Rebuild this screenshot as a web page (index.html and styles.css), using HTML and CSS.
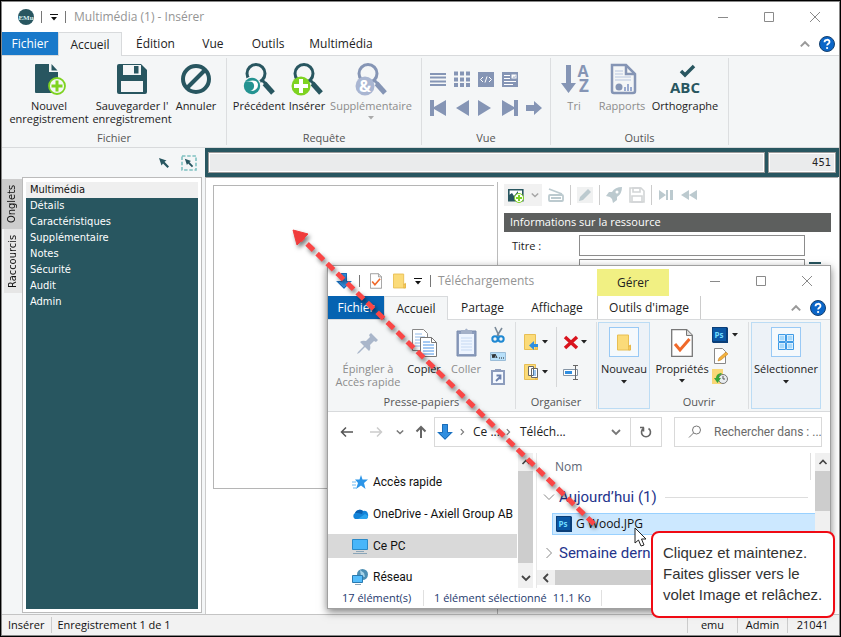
FILE: index.html
```html
<!DOCTYPE html>
<html lang="fr">
<head>
<meta charset="utf-8">
<title>Multimédia (1) - Insérer</title>
<link rel="stylesheet" href="styles.css">
</head>
<body>
<svg class="defs" aria-hidden="true">
  <defs>
    <symbol id="min" viewBox="0 0 12 12"><path d="M1 6.500h10" stroke="#8a8a8a" fill="none"/></symbol>
    <symbol id="max" viewBox="0 0 12 12"><path d="M1.500 1.500h9v9h-9z" stroke="#8a8a8a" fill="none"/></symbol>
    <symbol id="close" viewBox="0 0 12 12"><path d="M1 1l10 10M11 1L1 11" stroke="#8a8a8a" fill="none"/></symbol>
    <symbol id="up" viewBox="0 0 10 10"><path d="M1.500 7L5 3.500 8.500 7" stroke="currentColor" stroke-width="1.600" fill="none"/></symbol>
    <symbol id="down" viewBox="0 0 10 10"><path d="M1 3l4 4 4-4" stroke="currentColor" stroke-width="1.800" fill="none"/></symbol>
    <symbol id="thindown" viewBox="0 0 12 12"><path d="M1 3.500l5 5 5-5" stroke="currentColor" fill="none"/></symbol>
    <symbol id="thinright" viewBox="0 0 12 12"><path d="M3.500 1l5 5-5 5" stroke="currentColor" fill="none"/></symbol>
    <symbol id="right" viewBox="0 0 10 10"><path d="M3.500 1.500L7 5 3.500 8.500" stroke="currentColor" stroke-width="1.400" fill="none"/></symbol>
    <symbol id="left" viewBox="0 0 10 10"><path d="M7 1L3 5l4 4" stroke="currentColor" stroke-width="1.800" fill="none"/></symbol>
    <symbol id="caret" viewBox="0 0 6 4"><path d="M0 0h6L3 3.500z" fill="currentColor"/></symbol>
    <symbol id="qat" viewBox="0 0 8 8"><path d="M0 1.500h8" stroke="#111" /><path d="M1 4h6L4 7.500z" fill="#111"/></symbol>
    <symbol id="help" viewBox="0 0 16 16"><circle cx="8" cy="8" r="7.500" fill="#0b66c8" stroke="#16406e"/><path d="M5.500 6.200C5.500 3 10.600 3 10.500 6c0 1.700-2.400 1.900-2.400 3.600" fill="none" stroke="#fff" stroke-width="1.800"/><circle cx="8.100" cy="12" r="1.100" fill="#fff"/></symbol>
    <symbol id="lens" viewBox="0 0 32 32"><circle cx="13" cy="10.500" r="9" fill="none" stroke="currentColor" stroke-width="3"/><path d="M19 17l3.500 3.500" stroke="currentColor" stroke-width="3"/><path d="M21.500 20.500l8.500 9.500" stroke="currentColor" stroke-width="5"/></symbol>
    <symbol id="ps" viewBox="0 0 16 16"><path d="M0 0h15l1 1v15H1l-1-1z" fill="#0a3e78"/><path d="M1 1h13v13H1z" fill="#0a57a4"/><text x="2.500" y="11" font-family="Open Sans" font-weight="700" font-size="8" fill="#6fdcff">Ps</text></symbol>
    <symbol id="pointer" viewBox="0 0 12 12"><path d="M1 1l7.500 2.500-2 1.300L11 9.500 9.500 11 5 6.500 3.500 8.500z" fill="#285660"/></symbol>
    <symbol id="bluedown" viewBox="0 0 16 16"><path d="M5 0h6v8h5l-8 8-8-8h5z" fill="#2f8ee0"/><path d="M5.500.5h5v8h4L8 15 1.500 8.500h4z" fill="none" stroke="#1b6cb8"/></symbol>
    <symbol id="folder" viewBox="0 0 14 16"><path d="M.5.5h11V12l2-1.500v5H.5z" fill="#fbdb79" stroke="#e8bf54"/><path d="M11.500 11.500h2v4h-2z" fill="#f7c95b" stroke="#e0b040" stroke-width=".6"/></symbol>
    <symbol id="checkdoc" viewBox="0 0 22 28"><path d="M.7.7h15l5.600 5.600v21H.7z" fill="#fff" stroke="#777" stroke-width="1.300"/><path d="M15.500.7v5.800h5.800" fill="#ddd" stroke="#777"/><path d="M4 15l5 6 9.500-11" fill="none" stroke="#f0692a" stroke-width="3"/></symbol>
  </defs>
</svg>

<div class="app">
  <header class="titlebar">
    <svg class="logo" viewBox="0 0 16 16"><circle cx="8" cy="8" r="8" fill="#285660"/><text x="8" y="10.600" text-anchor="middle" font-family="Liberation Serif" font-weight="700" font-size="7" fill="#d6eeee">EMu</text></svg>
    <i class="vbar"></i>
    <svg class="i8"><use href="#qat"/></svg>
    <i class="vbar"></i>
    <span class="title">Multimédia (1) - Insérer</span>
    <div class="winbtns">
      <button aria-label="Réduire"><svg class="i12"><use href="#min"/></svg></button>
      <button aria-label="Agrandir"><svg class="i12"><use href="#max"/></svg></button>
      <button aria-label="Fermer"><svg class="i12"><use href="#close"/></svg></button>
    </div>
  </header>

  <nav class="tabs">
    <button class="file">Fichier</button>
    <button class="active">Accueil</button>
    <button class="t-edit">Édition</button>
    <button class="t-view">Vue</button>
    <button class="t-tools">Outils</button>
    <button class="t-mm">Multimédia</button>
    <div class="helpers"><svg class="i12"><use href="#up"/></svg><svg class="i16"><use href="#help"/></svg></div>
  </nav>

  <section class="ribbon">
    <div class="group">
      <div class="items g-file">
        <button class="big"><svg viewBox="0 0 32 32"><path d="M3 1h13v8h9v20q0 1-1 1H3q-1 0-1-1V2q0-1 1-1z" fill="#285660"/><path d="M18.500 1l6 6.500h-6z" fill="#285660"/><circle cx="24" cy="23" r="8" fill="#f4f6f7" stroke="#7ed321" stroke-width="1.800"/><path d="M24 17.500v11M18.500 23h11" stroke="#7ed321" stroke-width="3"/></svg><span>Nouvel<br>enregistrement</span></button>
        <button class="big"><svg viewBox="0 0 32 32"><path d="M3 1h22l6 6v22q0 2-2 2H3q-2 0-2-2V3q0-2 2-2z" fill="#285660"/><path d="M7 2h18v10H7zM5 18h22v11H5z" fill="#f4f6f7"/><path d="M18 3h4.500v7.500H18z" fill="#285660"/></svg><span>Sauvegarder l'<br>enregistrement</span></button>
        <button class="big"><svg viewBox="0 0 32 32"><circle cx="16" cy="16" r="13" fill="none" stroke="#285660" stroke-width="4"/><path d="M7 25L25 7" stroke="#285660" stroke-width="4"/></svg><span>Annuler</span></button>
      </div>
      <div class="glabel">Fichier</div>
    </div>
    <div class="group">
      <div class="items g-query">
        <button class="big teal"><svg viewBox="0 0 32 32"><use href="#lens"/><circle cx="9" cy="23" r="9.500" fill="#f4f6f7"/><circle cx="9" cy="23" r="8.200" fill="#249391"/><path d="M2 19q10-2 9 5-.500 3-4 4 8 0 8-6.500Q14 15 2 19z" fill="#fff"/></svg><span>Précédent</span></button>
        <button class="big teal"><svg viewBox="0 0 32 32"><use href="#lens"/><circle cx="10" cy="23" r="9.500" fill="#7ed321"/><path d="M10 16v14M3 23h14" stroke="#fff" stroke-width="4"/></svg><span>Insérer</span></button>
        <button class="big slate" disabled><svg viewBox="0 0 32 32"><use href="#lens"/><circle cx="10" cy="23" r="9.500" fill="#a9b6d2"/><text x="10" y="29" text-anchor="middle" font-family="Open Sans" font-weight="700" font-size="16" fill="#fff">&amp;</text></svg><span>Supplémentaire</span><svg class="caret"><use href="#caret"/></svg></button>
      </div>
      <div class="glabel">Requête</div>
    </div>
    <div class="group">
      <div class="items g-view">
        <div class="viewrow">
          <svg viewBox="0 0 16 16"><path d="M0 3h16M0 6.500h16M0 10.500h16M0 14h16" stroke="#8595b5" stroke-width="2"/></svg>
          <svg viewBox="0 0 16 16"><path d="M0 2.500h16M0 8.500h16M0 14h16" stroke="#8595b5" stroke-width="4" stroke-dasharray="4 2"/></svg>
          <svg viewBox="0 0 16 16"><path d="M0 1h16v15H0z" fill="#8595b5"/><path d="M5 6L2.500 8.500 5 11M11 6l2.500 2.500L11 11M9 5.500l-2 6" fill="none" stroke="#fff"/></svg>
          <svg viewBox="0 0 16 16"><path d="M0 1h16v15H0z" fill="#8595b5"/><path d="M2 4.500h6M2 7.500h6M2 10.500h12M2 13.500h9" stroke="#fff"/><path d="M9.500 3.500h5v4h-5z" fill="#fff"/><path d="M10.500 6.500l1-1 1 .5 1-2v2.500z" fill="#8595b5"/></svg>
        </div>
        <div class="viewrow">
          <svg viewBox="0 0 16 16"><path d="M0 0h4v7l12-7v16L4 9v7H0z" fill="#8595b5"/></svg>
          <svg viewBox="0 0 16 16"><path d="M15 0v16L2 8z" fill="#8595b5"/></svg>
          <svg viewBox="0 0 16 16"><path d="M0 0v16l13-8z" fill="#8595b5"/></svg>
          <svg viewBox="0 0 16 16"><path d="M16 0h-4v7L0 0v16l12-7v7h4z" fill="#8595b5"/></svg>
          <svg viewBox="0 0 16 16"><path d="M0 5h8V1l8 7-8 7v-4H0z" fill="#8595b5"/></svg>
        </div>
      </div>
      <div class="glabel">Vue</div>
    </div>
    <div class="group">
      <div class="items g-tools">
        <button class="big" disabled><svg viewBox="0 0 32 32"><path d="M8 2h5v18h5l-7.500 10L3 20h5z" fill="#8595b5"/><text x="25" y="14" text-anchor="middle" font-family="Open Sans" font-weight="700" font-size="16" fill="#8595b5">A</text><text x="26" y="29" text-anchor="middle" font-family="Open Sans" font-weight="700" font-size="17" fill="#8595b5">Z</text></svg><span>Tri</span></button>
        <button class="big" disabled><svg viewBox="0 0 32 32"><path d="M6 2h14l9 9v17q0 2-2 2H8q-2 0-2-2z" fill="#f4f6f7" stroke="#8595b5" stroke-width="2.500"/><path d="M20 2v9h9" fill="none" stroke="#8595b5" stroke-width="2.500"/><path d="M9 8h8M9 11h8M9 14h16M9 17h16" stroke="#b8c6e0"/><circle cx="13" cy="24" r="3.500" fill="#8595b5"/><path d="M19 28v-4M22 28v-7M25 28v-4" stroke="#9aabd0" stroke-width="2"/></svg><span>Rapports</span></button>
        <button class="big"><svg viewBox="0 0 32 32"><path d="M12 8l4 4 9-9" fill="none" stroke="#285660" stroke-width="3.500"/><text x="16" y="30" text-anchor="middle" font-family="Open Sans" font-weight="700" font-size="15" fill="#285660">ABC</text></svg><span>Orthographe</span></button>
      </div>
      <div class="glabel">Outils</div>
    </div>
  </section>

  <main class="workspace">
    <aside class="side">
      <div class="sidetools"><svg class="i12"><use href="#pointer"/></svg><svg class="i16" viewBox="0 0 16 16"><path d="M1 1h14v14H1z" fill="none" stroke="#7fc1c1" stroke-width="1.600" stroke-dasharray="3.500 1.700"/><use href="#pointer" x="3" y="3" width="10" height="10"/></svg></div>
      <div class="sidebody">
        <div class="vtabs"><button class="on">Onglets</button><button>Raccourcis</button></div>
        <div class="listbox">
          <ul>
            <li class="sel">Multimédia</li><li>Détails</li><li>Caractéristiques</li><li>Supplémentaire</li><li>Notes</li><li>Sécurité</li><li>Audit</li><li>Admin</li>
          </ul>
        </div>
      </div>
    </aside>
    <section class="record">
      <div class="recbar"><input class="wide" aria-label="Enregistrement" readonly><input class="num" aria-label="Numéro" value="451" readonly></div>
      <div class="recbody">
        <div class="imagecol"><div class="imagepane"></div></div>
        <div class="form">
          <div class="formtools">
            <span class="addimg"><svg class="i16" viewBox="0 0 16 16"><path d="M.8 2.800h14v11H.8z" fill="#fff" stroke="#285660" stroke-width="1.600"/><path d="M1 13V8l3-2 2 3 4-5v9z" fill="#285660"/><circle cx="11" cy="11" r="4.500" fill="#fff" stroke="#7ed321"/><path d="M11 8v6M8 11h6" stroke="#7ed321" stroke-width="2"/></svg><svg class="i8 light"><use href="#down"/></svg></span>
            <svg class="i16" viewBox="0 0 16 16"><path d="M1 2l13 5M1 9q0-1 1-1h12q1 0 1 1v4q0 1-1 1H2q-1 0-1-1zM3 11h10" fill="none" stroke="#bccacf" stroke-width="1.800"/></svg>
            <i></i>
            <svg class="i16 soft" viewBox="0 0 16 16"><path d="M2 14l1-4 8-8 3 3-8 8z" fill="#bccacf"/></svg>
            <i></i>
            <svg class="i16" viewBox="0 0 16 16"><path d="M16 0q-7 0-10 5H3L0 9l4 1 2 2 1 4 4-3v-3q5-3 5-10zM1 15l3-3" fill="#bccacf"/><circle cx="11" cy="5" r="1.500" fill="#fff"/></svg>
            <svg class="i16" viewBox="0 0 16 16"><path d="M1 1h11l3 3v11H1z" fill="#fff" stroke="#d2d5d6" stroke-width="1.600"/><path d="M4 1h7v4H4zM3 9h10v6H3z" fill="none" stroke="#d2d5d6" stroke-width="1.600"/></svg>
            <i></i>
            <svg class="i16" viewBox="0 0 16 16"><path d="M1 3l7 5-7 5zM8 3h2v10H8zM12 3h3v10h-3z" fill="#bccacf"/></svg>
            <svg class="i16" viewBox="0 0 16 16"><path d="M8 3v10L0 8zM16 3v10L8 8z" fill="#bccacf"/></svg>
          </div>
          <h2>Informations sur la ressource</h2>
          <div class="field"><label for="titre">Titre :</label><input id="titre"></div>
          <div class="field"><label class="req" for="auteur">Auteur :</label><input id="auteur"><span class="menu"></span></div>
        </div>
      </div>
    </section>
  </main>

  <footer class="status"><span>Insérer</span><span class="grow">Enregistrement 1 de 1</span><span class="cell">emu</span><span class="cell">Admin</span><span class="cell">21041</span></footer>

  <section class="explorer" aria-label="Téléchargements">
    <header class="xtitle">
      <svg class="i16"><use href="#bluedown"/></svg><i class="vbar"></i>
      <svg class="xdoc"><use href="#checkdoc"/></svg>
      <svg class="xfold"><use href="#folder"/></svg>
      <svg class="i8"><use href="#qat"/></svg><i class="vbar"></i>
      <span class="title">Téléchargements</span>
      <span class="manage">Gérer</span>
      <div class="winbtns">
        <button aria-label="Réduire"><svg class="i12"><use href="#min"/></svg></button>
        <button aria-label="Agrandir"><svg class="i12"><use href="#max"/></svg></button>
        <button aria-label="Fermer"><svg class="i12"><use href="#close"/></svg></button>
      </div>
    </header>
    <nav class="tabs xtabs">
      <button class="file">Fichier</button>
      <button class="active">Accueil</button>
      <button class="x-share">Partage</button>
      <button class="x-view">Affichage</button>
      <button class="x-img">Outils d'image</button>
      <div class="helpers"><svg class="i12"><use href="#up"/></svg><svg class="i16"><use href="#help"/></svg></div>
    </nav>
    <div class="ribbon xribbon">
      <div class="group">
        <div class="items x-clip">
          <button class="big" disabled><svg viewBox="0 0 32 32"><path d="M19 6l7 7-2 2-2-1-4 4q1 4-1 6l-4-4-6 6-2 1 1-2 6-6-4-4q2-2 6-1l4-4-1-2z" fill="#a9b6ca"/></svg><span>Épingler à<br>Accès rapide</span></button>
          <button class="big"><svg viewBox="0 0 32 32"><path d="M4.500 2.500h11l4 4v17h-15z" fill="#fff" stroke="#888"/><path d="M7 7h7M7 10h10M7 13h10M7 16h10M7 19h10" stroke="#8fb8e8"/><path d="M12.500 10.500h11l5 5v14h-16z" fill="#fff" stroke="#777"/><path d="M23.500 10.500v5h5" fill="none" stroke="#777"/><path d="M15 15h7M15 18h11M15 21h11M15 24h11M15 27h11" stroke="#4d94e6"/></svg><span>Copier</span></button>
          <button class="big" disabled><svg viewBox="0 0 32 32"><path d="M7 4h19v25H7z" fill="#8c9dbd" stroke="#7a8cae"/><path d="M9 7h15v20H9z" fill="#eef5ff"/><path d="M11 11h11M11 14h11M11 17h11M11 20h11M11 23h11" stroke="#c6d9f2"/><path d="M11 3h4q1-3 3 0h4v4H11z" fill="#a3b0c8"/></svg><span>Coller</span></button>
          <div class="smalls">
            <svg viewBox="0 0 16 16"><path d="M5 0l4 9M12 1L7 9" stroke="#7a8a99" stroke-width="1.600"/><circle cx="5" cy="12" r="2.700" fill="none" stroke="#1e88d2" stroke-width="2"/><circle cx="11" cy="12" r="2.700" fill="none" stroke="#1e88d2" stroke-width="2"/></svg>
            <svg viewBox="0 0 16 16"><path d="M.5 4.500h15v8H.5z" fill="#b8e0fa" stroke="#9bbdd8"/><path d="M2 6l1 4 1-4 1 4M5 6l2 4M9 10h1M11 10h1M13 10h1" fill="none" stroke="#222"/></svg>
            <svg viewBox="0 0 16 16"><path d="M2 2h12v13H2z" fill="#f5f9ff" stroke="#8d9dbd" stroke-width="2"/><path d="M5 0h6v3H5z" fill="#8d9dbd"/><path d="M6 12l4-4M6.500 6.500h4v4" fill="none" stroke="#6d82ad" stroke-width="1.800"/></svg>
          </div>
        </div>
        <div class="glabel">Presse-papiers</div>
      </div>
      <div class="group">
        <div class="items x-org">
          <div class="duo"><svg class="i16" viewBox="0 0 16 16"><use href="#folder" width="14" height="16"/><path d="M14 10v3h-4v3L5 11.500 10 7v3z" fill="#2f8ee0"/></svg><svg class="caret"><use href="#caret"/></svg></div>
          <div class="duo sep"><svg class="i16" viewBox="0 0 16 16"><path d="M2 3l12 11M14 3L2 14" stroke="#d9141e" stroke-width="3.500"/></svg><svg class="caret"><use href="#caret"/></svg></div>
          <div class="duo"><svg class="i16" viewBox="0 0 16 16"><use href="#folder" width="14" height="16"/><path d="M4.500 2.500h5v9h-5zM7.500 4.500h6v9h-6z" fill="#fff" stroke="#666"/><path d="M9 7h3M9 9h3M9 11h3" stroke="#3d8fe0"/></svg><svg class="caret"><use href="#caret"/></svg></div>
          <div class="duo sep"><svg class="i16" viewBox="0 0 16 16"><path d="M.5 5.500h14v6H.5z" fill="#fff" stroke="#8595a5"/><path d="M2 7h7v3H2z" fill="#2f8ee0"/><path d="M12.500 2v13M10 1.500h5M10 15.500h5" stroke="#666"/></svg></div>
        </div>
        <div class="glabel">Organiser</div>
      </div>
      <button class="tile"><span class="pic"><svg class="tfold"><use href="#folder"/></svg></span><span>Nouveau</span><svg class="caret"><use href="#caret"/></svg></button>
      <div class="group">
        <div class="items x-open">
          <button class="big"><svg viewBox="0 0 32 32"><use href="#checkdoc" x="5" y="2" width="22" height="28"/></svg><span>Propriétés</span><svg class="caret"><use href="#caret"/></svg></button>
          <div class="smalls wide">
            <div class="duo"><svg class="i16"><use href="#ps"/></svg><svg class="caret"><use href="#caret"/></svg></div>
            <svg viewBox="0 0 16 16"><path d="M2.500.5h8l3 3v12h-11z" fill="#fff" stroke="#888"/><path d="M6 13l1-3 7-6 2 2-7 6z" fill="#f3b13c" stroke="#b8751a" stroke-width=".5"/></svg>
            <svg viewBox="0 0 16 16"><path d="M0 0h11v15H0z" fill="#f9d777"/><circle cx="11" cy="10" r="4.500" fill="#e8ecef" stroke="#777"/><path d="M11 7v3h2" fill="none" stroke="#555"/><path d="M9 4q-5 1-5 5H2l3.500 5L9 9H7q0-3 3-4z" fill="#37a53a"/></svg>
          </div>
        </div>
        <div class="glabel">Ouvrir</div>
      </div>
      <button class="tile select"><span class="pic"><svg class="i16" viewBox="0 0 16 16"><path d="M.5.500h7v7h-7zM8.500.500h7v7h-7zM.5 8.500h7v7h-7zM8.500 8.500h7v7h-7z" fill="#fff" stroke="#3f9be6"/><path d="M1.500 1.500h5v5h-5zM9.500 1.500h5v5h-5zM1.500 9.500h5v5h-5zM9.500 9.500h5v5h-5z" fill="#a9dafb"/></svg></span><span>Sélectionner</span><svg class="caret"><use href="#caret"/></svg></button>
    </div>

    <div class="address">
      <svg class="i14" viewBox="0 0 14 14"><path d="M13 7H2M6 2.500L1.500 7 6 11.500" fill="none" stroke="#555" stroke-width="1.500"/></svg>
      <svg class="i14" viewBox="0 0 14 14"><path d="M1 7h11M8 2.500L12.500 7 8 11.500" fill="none" stroke="#ccc" stroke-width="1.500"/></svg>
      <svg class="i8 grey"><use href="#down"/></svg>
      <svg class="i14" viewBox="0 0 14 14"><path d="M7 13V2M2.500 6.500L7 2l4.500 4.500" fill="none" stroke="#666" stroke-width="2"/></svg>
      <div class="path">
        <svg class="i16"><use href="#bluedown"/></svg><svg class="i8 grey"><use href="#right"/></svg><span class="crumb1">Ce ...</span><svg class="i8 grey"><use href="#right"/></svg><span class="crumb2">Téléch...</span>
        <svg class="i10 grey"><use href="#down"/></svg>
        <button class="refresh" aria-label="Actualiser"><svg viewBox="0 0 12 12"><path d="M8.500 2.500A4.500 4.500 0 1 1 3.500 2.500M3.500 5.500V1.500M0 1.500h4" fill="none" stroke="#666" stroke-width="1.600"/></svg></button>
      </div>
      <label class="search"><svg class="i14" viewBox="0 0 14 14"><circle cx="8.500" cy="5" r="4" fill="none" stroke="#777"/><path d="M5.500 8L1 12.500" stroke="#777"/></svg><input aria-label="Rechercher" placeholder="Rechercher dans : ..."></label>
    </div>

    <div class="xbody">
      <ul class="navpane">
        <li><svg class="i16" viewBox="0 0 16 16"><path d="M9 1l1.500 4.500H16l-4 3.500 1.500 6L9 11.500 4 15l2-6-3-3.500h4.500z" fill="#2b95e8"/><path d="M0 8h4M0 11h4M1 14h3" stroke="#6bb8f0"/></svg>Accès rapide</li>
        <li><svg class="i16" viewBox="0 0 16 16"><path d="M3 13a3.500 3.500 0 0 1 0-6 5 5 0 0 1 8-2 4 4 0 0 1 2 8z" fill="#1383d8"/><path d="M6 13l7-5q3 1 3 3t-3 2z" fill="#2ba4ee"/><path d="M3 7a5 5 0 0 1 8-2l-1 3-4-1z" fill="#0b60b0"/></svg>OneDrive - Axiell Group AB</li>
        <li class="sel"><svg class="i16" viewBox="0 0 16 16"><path d="M.5 1.500h15v10H.5z" fill="#48b6fa" stroke="#2a8ac8"/><path d="M4 13.500h8M1 15.500h14" stroke="#8aa5b8"/></svg>Ce PC</li>
        <li><svg class="i16" viewBox="0 0 16 16"><circle cx="10.500" cy="5.500" r="5.500" fill="#4d8fb4"/><path d="M8 1l4 3 1 4-4-1z" fill="#a8d4e8"/><path d="M.5 6.500h10v7H.5z" fill="#55bdfb" stroke="#2a7ab0"/><path d="M3 15.500h6" stroke="#8aa5b8"/></svg>Réseau</li>
      </ul>
      <div class="vscroll"><svg class="i10"><use href="#up"/></svg><i class="long"></i><svg class="i10"><use href="#down"/></svg></div>
      <div class="files">
        <div class="colhead">Nom</div>
        <div class="fgroup"><svg class="i12"><use href="#thindown"/></svg><span>Aujourd’hui (1)</span><hr></div>
        <div class="file-row"><svg class="i16"><use href="#ps"/></svg>G Wood.JPG</div>
        <div class="fgroup later"><svg class="i12"><use href="#thinright"/></svg><span>Semaine dern</span></div>
        <div class="hscroll"><svg class="i10"><use href="#left"/></svg><i></i></div>
      </div>
      <div class="vscroll end"><svg class="i10"><use href="#up"/></svg><i class="short"></i></div>
    </div>
    <footer class="xstatus"><span class="count">17 élément(s)</span><span>1 élément sélectionné</span><span class="size">11.1 Ko</span></footer>
  </section>

  <svg class="drag" viewBox="0 0 320 310" aria-hidden="true">
    <path d="M303 298L8 10" stroke="#fa4646" stroke-width="5" stroke-dasharray="9 5" fill="none"/>
    <path d="M2 4l15 4-11 11z" fill="#f03c3c" stroke="#f03c3c"/>
  </svg>
  <svg class="cursor" viewBox="0 0 13 20" aria-hidden="true"><path d="M1 1v15l3.500-3 2.500 6 3-1-2.500-6H12z" fill="#fff" stroke="#222"/></svg>
  <p class="callout">Cliquez et maintenez. Faites glisser vers le volet Image et relâchez.</p>
</div>
</body>
</html>
```
FILE: styles.css
```css
* { box-sizing: border-box; }
body { margin: 0; font: 12px/16px "Open Sans", "Noto Sans", sans-serif; color: #222; }
button, input { font: inherit; color: inherit; border: 0; padding: 0; margin: 0; background: none; min-width: 0; }
ul { list-style: none; margin: 0; padding: 0; }
svg { flex: none; display: block; overflow: visible; }
.defs { position: absolute; width: 0; height: 0; }
.i8 { width: 8px; height: 8px; }
.i10 { width: 10px; height: 10px; }
.i12 { width: 12px; height: 12px; }
.i14 { width: 14px; height: 14px; }
.i16 { width: 16px; height: 16px; }
.grey { color: #777; }
.light { color: #a5a5a5; }
.caret { width: 6px; height: 4px; }

.app { position: relative; min-height: 100vh; display: flex; flex-direction: column; border: 1px solid #000; border-right-width: 2px; border-bottom-width: 2px; outline: 1px solid #888; outline-offset: -2px; background: #fff; overflow: hidden; }

/* Title bars */
.titlebar { height: 31px; display: flex; align-items: center; padding-left: 17px; }
.logo { width: 16px; height: 16px; }
.vbar { width: 1px; height: 12px; background: #777; margin: 0 8px 0 7px; }
.title { color: #949494; }
.winbtns { margin-left: auto; display: flex; }
.winbtns button { width: 46px; display: flex; justify-content: center; }
.titlebar .winbtns { padding-right: 1px; }

/* Ribbon tabs */
.tabs { height: 24px; display: flex; padding-left: 1px; border-bottom: 1px solid #d8dadc; }
.tabs button { height: 23px; text-align: center; white-space: nowrap; }
.tabs .file { width: 56px; background: #1979ca; color: #fff; }
.tabs .active { width: 64px; height: 24px; background: #f4f6f7; border: 1px solid #d8dadc; border-bottom: 0; }
.t-edit { width: 67px; }
.t-view { width: 48px; }
.t-tools { width: 62px; }
.t-mm { width: 84px; }
.helpers { margin-left: auto; display: flex; align-items: center; gap: 8px; padding-right: 4px; color: #999; }

/* Ribbon */
.ribbon { height: 92px; display: flex; background: #f4f6f7; border-bottom: 1px solid #d8dadc; padding: 2px 0 2px 1px; font-size: 11px; }
.group { display: flex; flex-direction: column; border-right: 1px solid #dcdee0; color: #222; }
.items { height: 73px; display: grid; align-items: start; padding: 5px 4px 0; }
.glabel { text-align: center; line-height: 14px; color: #555; }
.g-file { grid-template-columns: 84px 82px 46px; padding: 5px 7px 0 5px; }
.g-query { grid-template-columns: 60px 36px 92px; padding: 5px 4px 0 2px; }
.g-tools { grid-template-columns: 36px 60px 66px; padding: 5px 10px 0 5px; }
.big { display: flex; flex-direction: column; align-items: center; line-height: 13px; white-space: nowrap; color: #222; }
.big > svg:first-child { width: 32px; height: 32px; margin-bottom: 4px; }
.big:disabled { color: #8c8c8c; }
.big .caret { margin-top: 4px; }
.teal > svg { color: #285660; }
.slate > svg { color: #8595b5; }
.slate .caret { color: #aaa; }
.g-view { padding: 13px 8px 0; align-content: start; row-gap: 13px; width: 128px; }
.viewrow { display: flex; gap: 8px; }
.viewrow svg { width: 16px; height: 16px; }

/* Workspace */
.workspace { flex: 1; display: flex; background: #fff; }
.side { width: 204px; flex: none; display: flex; flex-direction: column; background: #f4f6f7; padding: 0 3px 1px 1px; }
.sidetools { height: 29px; display: flex; align-items: center; justify-content: flex-end; gap: 11px; padding-right: 5px; }
.sidebody { flex: 1; display: flex; }
.vtabs { width: 20px; padding-top: 2px; color: #111; }
.vtabs button { writing-mode: vertical-rl; transform: rotate(180deg); width: 18px; height: 64px; margin-left: 2px; background: #e6e6e6; font: 11px/16px "DejaVu Sans Condensed", sans-serif; display: block; }
.vtabs .on { width: 20px; height: 50px; margin: 0; background: #cdcdcd; }
.listbox { flex: 1; border: 1px solid #bbb; background: #fff; padding: 4px 3px 3px; display: flex; }
.listbox ul { flex: 1; background: #285660; color: #fff; font: 11px/16px "DejaVu Sans Condensed", sans-serif; }
.listbox li { padding-left: 4px; }
.listbox .sel { background: #efefef; color: #111; }
.record { flex: 1; display: flex; flex-direction: column; }
.recbar { height: 29px; background: #285660; display: flex; gap: 3px; padding: 4px 3px; }
.recbar input { border: 1px solid #9a9a9a; outline: 1px solid #fff; outline-offset: -2px; background: #eaebec; text-align: right; padding-right: 4px; font-family: "DejaVu Sans Condensed", sans-serif; font-size: 11px; }
.wide { flex: 1; }
.num { width: 68px; }
.recbody { flex: 1; display: flex; border-left: 1px solid #ccc; border-top: 1px solid #aaa; margin-right: 1px; }
.imagecol { width: 291px; flex: none; padding: 7px 0 0 7px; }
.imagepane { height: 304px; border: 1px solid #b5b5b5; border-right: 0; width: 281px; }
.form { flex: 1; border-left: 1px solid #bbb; margin-top: 4px; padding: 2px 7px 0 6px; }
.formtools { display: flex; align-items: center; height: 22px; gap: 7px; margin-bottom: 7px; }
.formtools i { width: 1px; height: 20px; background: #ccc; margin: 0 -1px; }
.addimg { display: flex; align-items: center; gap: 7px; background: #f1f1f1; height: 22px; width: 38px; padding-left: 4px; margin-right: -1px; }
.soft { background: #f0f1f1; }
h2 { margin: 0 0 3px; height: 19px; background: #5d5f5e; color: #fff; font: 11px/18px "Open Sans", sans-serif; padding-left: 6px; }
.field { display: flex; padding-left: 8px; margin-bottom: 3px; font-size: 11px; line-height: 21px; }
.field label { width: 67px; }
.field input { width: 226px; height: 21px; border: 1px solid #8c8c8c; background: #fff; }
.req { color: #b02020; }
.menu { width: 12px; height: 5px; margin: 3px 0 0 4px; border-top: 2px solid #285660; border-bottom: 2px solid #285660; }

.status { height: 21px; display: flex; align-items: center; background: #f2f2f2; border-top: 1px solid #c4c4c4; padding: 0 2px 0 7px; font-size: 11px; color: #111; }
.status span { border-left: 1px solid #ccc; padding: 0 7px 0 5px; }
.status span:first-child { border: 0; padding-left: 0; }
.status .grow { flex: 1; }
.status .cell { width: 50px; text-align: center; padding: 0; }

/* Floating file explorer */
.explorer { position: absolute; left: 326px; right: 8px; top: 264px; background: #fff; border: 1px solid #a0a0a0; box-shadow: 0 3px 8px rgba(0,0,0,.5); }
.xtitle { height: 30px; display: flex; align-items: center; padding-left: 8px; position: relative; }
.xtitle .vbar { margin: 0 10px 0 7px; }
.xdoc { width: 12px; height: 16px; margin-right: 11px; }
.xfold { width: 13px; height: 16px; margin-right: 8px; }
.xtitle .i8 + .vbar { margin-left: 8px; margin-right: 7px; }
.manage { position: absolute; left: 269px; top: 3px; width: 72px; height: 27px; line-height: 27px; background: #f1f083; text-align: center; }
.xtabs { padding-left: 0; }
.xtabs .file { background: #0663b1; }
.x-share { width: 69px; }
.x-view { width: 80px; }
.tabs .x-img { width: 104px; border-left: 1px solid #ccc; border-right: 1px solid #ccc; }
.xribbon { padding-left: 0; }
.x-clip { grid-template-columns: 70px 42px 42px 24px; padding: 5px 4px 0 5px; }
.xribbon .big > svg:first-child { margin-bottom: 3px; }
.smalls { display: flex; flex-direction: column; gap: 5px; margin-left: 3px; }
.smalls svg:not(.caret) { width: 16px; height: 16px; }
.smalls.wide { margin: 0; }
.x-org { grid-template-columns: 38px 40px; gap: 0; padding: 5px 0 8px 2px; align-items: stretch; }
.duo { display: flex; align-items: center; gap: 2px; padding-left: 7px; }
.x-org .duo { padding-left: 6px; }
.sep { border-left: 1px solid #d5d7d9; }
.smalls .duo { padding: 0; gap: 4px; }
.x-open { grid-template-columns: 60px 32px; padding: 5px 4px 0 2px; }
.tile { width: 52px; height: 87px; display: flex; flex-direction: column; align-items: center; margin-left: 1px; border: 1px solid #bcdcf4; background: #edf2f7; line-height: 13px; padding-top: 4px; white-space: nowrap; }
.pic { width: 30px; height: 30px; border: 1px solid #99c9f5; background: #f5f9fc; display: flex; align-items: center; justify-content: center; margin-bottom: 5px; }
.tfold { width: 14px; height: 17px; }
.tile .caret { margin-top: 5px; }
.select { width: 70px; margin-left: 2px; }

.address { height: 41px; display: flex; align-items: center; padding: 0 8px 1px 12px; }
.address > .i14 + .i14 { margin: 0 13px 0 15px; }
.address > .i8 + .i14 { margin: 0 6px 0 10px; }
.path { width: 228px; height: 30px; border: 1px solid #d9d9d9; display: flex; align-items: center; padding-left: 2px; }
.path .i16 + .i8 { margin: 0 7px 0 5px; }
.crumb1 { width: 31px; }
.crumb2 { margin-left: 8px; flex: 1; }
.refresh { width: 31px; height: 28px; margin-left: 9px; border-left: 1px solid #d9d9d9; display: flex; align-items: center; justify-content: center; }
.refresh svg { width: 12px; height: 12px; }
.search { flex: 1; height: 30px; margin-left: 12px; border: 1px solid #d9d9d9; display: flex; align-items: center; padding-left: 13px; gap: 12px; }
.search input { flex: 1; width: 0; font: 12px/16px Roboto, sans-serif; }
.search input::placeholder { color: #6a6a6a; opacity: 1; }

.xbody { height: 135px; display: flex; }
.navpane { width: 190px; padding-top: 17px; font: 12px/16px Roboto, sans-serif; }
.navpane li { height: 24px; margin-bottom: 8px; display: flex; align-items: center; gap: 5px; padding-left: 24px; white-space: nowrap; color: #111; }
.navpane li:last-child { margin: 0; height: 22px; }
.navpane .sel { background: #d9d9d9; width: 189px; }
.vscroll { width: 15px; background: #f0f0f0; display: flex; flex-direction: column; align-items: center; color: #444; padding: 4px 0 5px; }
.vscroll i { width: 15px; background: #cdcdcd; margin: 4px 0 10px; }
.long { height: 92px; }
.short { height: 40px; }
.files { flex: 1; min-width: 0; border-left: 1px solid #e8e8e8; margin-left: 3px; }
.colhead { height: 27px; line-height: 27px; padding-left: 18px; margin-right: 4px; border-right: 1px solid #ddd; color: #5d6675; }
.fgroup { display: flex; align-items: center; height: 33px; padding: 1px 7px 0 6px; gap: 4px; color: #888; }
.fgroup span { color: #24348c; font: 15px/20px Roboto, sans-serif; white-space: nowrap; }
.fgroup hr { flex: 1; border: 0; border-top: 1px solid #ddd; margin: 0 0 0 4px; }
.file-row { height: 22px; margin-left: 15px; display: flex; align-items: center; gap: 4px; padding-left: 3px; background: #cce8ff; border: 1px solid #99d1ff; border-right: 0; color: #111; }
.fgroup.later { height: 35px; padding-top: 0; }
.hscroll { height: 15px; background: #f0f0f0; display: flex; align-items: center; padding-left: 4px; gap: 4px; color: #444; }
.hscroll i { height: 15px; width: 140px; background: #cdcdcd; }
.xstatus { height: 20px; display: flex; align-items: center; padding-left: 14px; color: #1e3a6e; font-size: 11px; }
.xstatus span { white-space: nowrap; }
.count { width: 82px; margin-right: 10px; border-right: 1px solid #e0e0e0; }
.size { margin-left: 6px; padding-right: 10px; border-right: 1px solid #e0e0e0; }

/* Annotation layer */
.drag { position: absolute; left: 290px; top: 225px; width: 320px; height: 310px; filter: drop-shadow(2px 3px 2px rgba(0,0,0,.5)); }
.cursor { position: absolute; left: 633px; top: 526px; width: 13px; height: 20px; }
.callout { position: absolute; left: 650px; top: 530px; width: 184px; height: 87px; margin: 0; padding: 9px 8px 0 10px; border: 2px solid #f00a14; border-radius: 8px; background: #fff; color: #333; font: 15px/21px "Liberation Sans", sans-serif; }
```
